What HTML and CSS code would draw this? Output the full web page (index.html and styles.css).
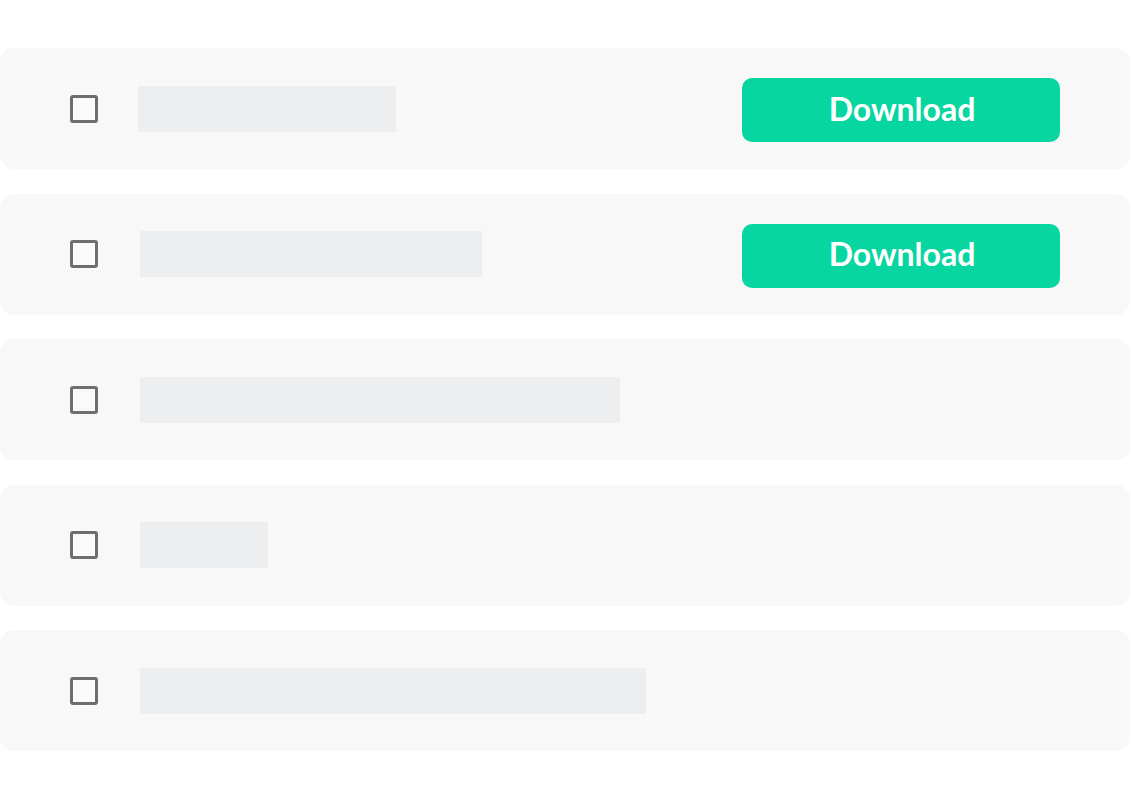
FILE: index.html
```html
<!DOCTYPE html>
<html lang="en">
<head>
<meta charset="utf-8">
<title>Downloads</title>
<link rel="stylesheet" href="styles.css">
</head>
<body>
<div class="list">
  <div class="row">
    <span class="check"></span>
    <span class="bar bar-first" style="width:258px"></span>
    <button class="download">Download</button>
  </div>
  <div class="row">
    <span class="check"></span>
    <span class="bar" style="width:342px"></span>
    <button class="download">Download</button>
  </div>
  <div class="row">
    <span class="check"></span>
    <span class="bar" style="width:480px"></span>
  </div>
  <div class="row">
    <span class="check"></span>
    <span class="bar" style="width:128px"></span>
  </div>
  <div class="row">
    <span class="check"></span>
    <span class="bar" style="width:506px"></span>
  </div>
</div>
</body>
</html>
```
FILE: styles.css
```css
html, body {
  margin: 0;
  padding: 0;
  background: #ffffff;
  font-family: Lato, "Open Sans", sans-serif;
}
.list {
  display: flex;
  flex-direction: column;
  gap: 24.5px;
  padding-top: 48px;
  width: 1130px;
}
.row {
  display: flex;
  align-items: center;
  height: 121px;
  background: #f8f8f8;
  border-radius: 14px;
  padding-left: 70px;
  padding-right: 70px;
}
.check {
  flex: none;
  width: 28px;
  height: 28px;
  box-sizing: border-box;
  border: 3px solid #6e6e6e;
  border-radius: 3px;
  background: #fafafa;
}
.bar {
  flex: none;
  height: 46px;
  margin-left: 42px;
  background: #edeef0;
}
.bar-first {
  margin-left: 40px;
}
.download {
  margin-left: auto;
  margin-top: 3px;
  width: 318px;
  height: 64px;
  border: none;
  border-radius: 10px;
  background: #07d6a0;
  color: #ffffff;
  font-family: Lato, "Open Sans", sans-serif;
  font-weight: 700;
  font-size: 32px;
  padding: 0 0 4px 2px;
  cursor: pointer;
}
```
